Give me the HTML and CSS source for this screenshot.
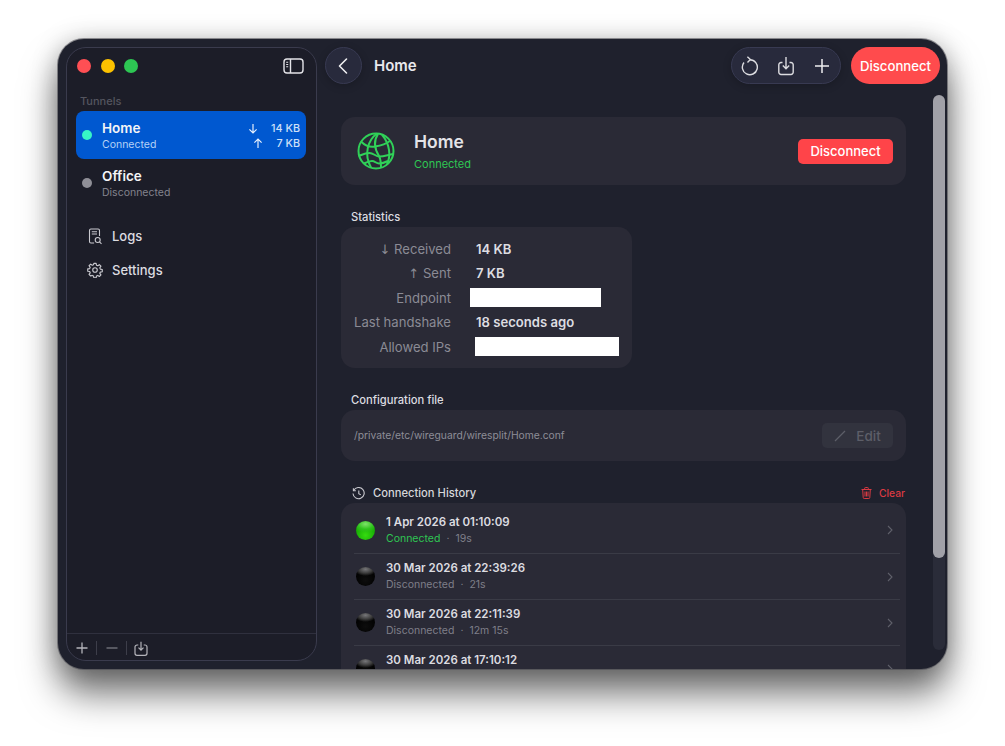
FILE: index.html
```html
<!DOCTYPE html>
<html lang="en">
<head>
<meta charset="utf-8">
<title>Wiresplit</title>
<link rel="stylesheet" href="styles.css">
</head>
<body>
<div class="window">
  <aside class="sidebar">
    <div class="side-top">
      <div class="lights"><span class="light red"></span><span class="light yellow"></span><span class="light green"></span></div>
      <svg class="side-toggle" width="21" height="16" viewBox="0 0 21 16" fill="none" stroke="#e4e4e8" stroke-width="1.400"><rect x="1" y="1" width="19" height="14" rx="3"/><path d="M7.500 1v14"/><path d="M3.200 4.300h2M3.200 6.500h2M3.200 8.700h2" stroke-width="1.100"/></svg>
    </div>
    <div class="side-label">Tunnels</div>
    <div class="tunnel active">
      <span class="tdot on"></span>
      <div class="tinfo"><div class="tname">Home</div><div class="tstate">Connected</div></div>
      <div class="ttraffic">
        <div class="tline"><svg width="10" height="11" viewBox="0 0 10 11" fill="none" stroke="currentColor" stroke-width="1.200"><path d="M5 1v9M1.400 6.400 5 10l3.600-3.600"/></svg><span class="tv1">14 KB</span></div>
        <div class="tline"><svg width="10" height="11" viewBox="0 0 10 11" fill="none" stroke="currentColor" stroke-width="1.200"><path d="M5 10V1M1.400 4.600 5 1l3.600 3.600"/></svg><span class="tv2">7 KB</span></div>
      </div>
    </div>
    <div class="tunnel">
      <span class="tdot off"></span>
      <div class="tinfo"><div class="tname">Office</div><div class="tstate">Disconnected</div></div>
    </div>
    <nav class="side-nav">
      <div class="nav-item">
        <svg width="16" height="17" viewBox="0 0 16 17" fill="none" stroke="#c9c9cf" stroke-width="1.100"><path d="M12.500 8V2.400A1.400 1.400 0 0 0 11.100 1H3.900A1.400 1.400 0 0 0 2.500 2.400v11.200A1.400 1.400 0 0 0 3.900 15h3.200"/><path d="M4.800 3.800h5.200M4.800 6h5.200"/><circle cx="10.700" cy="12" r="2.500"/><path d="m12.500 13.800 2 2"/></svg>
        <span>Logs</span>
      </div>
      <div class="nav-item">
        <svg width="16" height="16" viewBox="0 0 24 24" fill="none" stroke="#c9c9cf" stroke-width="1.700" stroke-linejoin="round"><circle cx="12" cy="12" r="3.400"/><path d="M10.300 2h3.400l.5 2.900 1.900.8 2.400-1.700 2.400 2.400-1.700 2.400.8 1.900 2.900.5v3.400l-2.900.5-.8 1.900 1.700 2.400-2.400 2.400-2.400-1.700-1.900.8-.5 2.900h-3.400l-.5-2.900-1.900-.8L5.500 21 3.100 18.600l1.700-2.400-.8-1.900L1.100 13.800v-3.400L4 9.900l.8-1.900L3.100 5.600 5.500 3.200l2.400 1.700 1.900-.8z"/></svg>
        <span>Settings</span>
      </div>
    </nav>
    <div class="side-foot">
      <svg width="12" height="12" viewBox="0 0 12 12" stroke="#b4b4ba" stroke-width="1.300"><path d="M6 .5v11M.5 6h11"/></svg>
      <span class="foot-sep"></span>
      <svg class="dim" width="12" height="12" viewBox="0 0 12 12" stroke="#6b6c75" stroke-width="1.300"><path d="M.5 6h11"/></svg>
      <span class="foot-sep"></span>
      <svg class="foot-import" width="14" height="15" viewBox="0 0 14 15" fill="none" stroke="#b4b4ba" stroke-width="1.200"><path d="M4.300 4H3a2 2 0 0 0-2 2v6.300a2 2 0 0 0 2 2h8a2 2 0 0 0 2-2V6a2 2 0 0 0-2-2H9.700"/><path d="M7 .8v8M4.500 6.600 7 9.100l2.500-2.500"/></svg>
    </div>
  </aside>

  <main class="main">
    <header class="topbar">
      <button class="back"><svg width="12" height="18" viewBox="0 0 12 18" fill="none" stroke="#eeeef0" stroke-width="1.600" stroke-linecap="round" stroke-linejoin="round"><path d="M8.500 2 1.500 9l7 7"/></svg></button>
      <div class="top-title">Home</div>
      <div class="tools">
        <svg width="18" height="20" viewBox="0 0 18 20" fill="none" stroke="#dcdce0" stroke-width="1.400"><path d="M9 3.700A7.500 7.500 0 1 1 3 6.500"/><path d="M6.400 .7 9.400 3.600 6.500 6.500"/></svg>
        <svg width="18" height="20" viewBox="-0.500 0 18 20" fill="none" stroke="#dcdce0" stroke-width="1.400"><path d="M5 6.500H3.500a2.200 2.200 0 0 0-2.200 2.200v7.600a2.200 2.200 0 0 0 2.200 2.200h10a2.200 2.200 0 0 0 2.200-2.200V8.700a2.200 2.200 0 0 0-2.200-2.200H12"/><path d="M8.500 1v11.500M5.300 9.500l3.200 3.200 3.200-3.200"/></svg>
        <svg width="18" height="16" viewBox="-1 0 18 16" stroke="#eeeef0" stroke-width="1.500"><path d="M8 1v14M1 8h14"/></svg>
      </div>
      <button class="pill-danger">Disconnect</button>
    </header>

    <div class="content">
      <section class="card hero">
        <svg class="globe" width="38" height="38" viewBox="0 0 38 38" fill="none" stroke="#30d158" stroke-width="2"><circle cx="19" cy="19" r="17.500"/><path d="M20 1.500C11 8 6.500 22 14 35.500"/><path d="M21 2c-4 6-4 14 1 22 1.500 3 2 7 2 11.500"/><path d="M25 2.800C33 12 34 24 30 32"/><path d="M4 9.500c4 4 9 6 14 5 6-1 11-2.500 15-5.500"/><path d="M1.500 24c4-1.500 7-3 11-3 4 0 6 3.500 10 3.500 5 0 9-2 13.500-2.500"/><path d="M7 31.500c3-1.500 5-2.500 8-2.500 3 0 4 2.500 7 2.500 3 0 6-1 9-2.500"/></svg>
        <div class="hero-text">
          <div class="hero-name">Home</div>
          <div class="hero-state">Connected</div>
        </div>
        <button class="btn-danger">Disconnect</button>
      </section>

      <h2 class="sec-label stats-label">Statistics</h2>
      <section class="card stats">
        <div class="s-k"><span class="s-arrow">↓</span> Received</div><div class="s-v">14 KB</div>
        <div class="s-k"><span class="s-arrow">↑</span> Sent</div><div class="s-v">7 KB</div>
        <div class="s-k">Endpoint</div><div class="s-v"><span class="redact r1"></span></div>
        <div class="s-k">Last handshake</div><div class="s-v">18 seconds ago</div>
        <div class="s-k">Allowed IPs</div><div class="s-v"><span class="redact r2"></span></div>
      </section>

      <h2 class="sec-label conf-label">Configuration file</h2>
      <section class="card conf">
        <div class="conf-path">/private/etc/wireguard/wiresplit/Home.conf</div>
        <button class="btn-edit"><svg width="12" height="12" viewBox="0 0 12 12" stroke="#5d5e68" stroke-width="1.300"><path d="M1 11 11 1"/></svg><span>Edit</span></button>
      </section>

      <div class="hist-head">
        <svg width="13" height="13" viewBox="0 0 13 13" fill="none" stroke="#c9c9cf" stroke-width="1.100"><path d="M1.700 3.400A5.600 5.600 0 1 1 1 6.500"/><path d="M1.400 1.200v2.500h2.500"/><path d="M6.800 3.500v3.200l2 1.200"/></svg>
        <span class="hist-title">Connection History</span>
        <svg class="trash" width="11" height="12" viewBox="0 0 11 12" fill="none" stroke="#d93a42" stroke-width="1"><path d="M.5 2.500h10M3.700 2.500V1.200q0-.7.700-.7h2.200q.7 0 .7.700v1.300M1.700 2.500l.5 8q0 1 1 1h4.600q1 0 1-1l.5-8M4 4.500v5M5.500 4.500v5M7 4.500v5"/></svg>
        <span class="hist-clear">Clear</span>
      </div>

      <section class="card hist">
        <div class="row first">
          <span class="orb green-orb"></span>
          <div class="row-text"><div class="row-title">1 Apr 2026 at 01:10:09</div><div class="row-sub"><span class="ok">Connected</span><i>·</i><span>19s</span></div></div>
          <svg class="chev" width="6" height="10" viewBox="0 0 6 10" fill="none" stroke="#5e5f69" stroke-width="1.100"><path d="m1 1 4 4-4 4"/></svg>
        </div>
        <div class="row">
          <span class="orb"></span>
          <div class="row-text"><div class="row-title">30 Mar 2026 at 22:39:26</div><div class="row-sub"><span>Disconnected</span><i>·</i><span>21s</span></div></div>
          <svg class="chev" width="6" height="10" viewBox="0 0 6 10" fill="none" stroke="#5e5f69" stroke-width="1.100"><path d="m1 1 4 4-4 4"/></svg>
        </div>
        <div class="row">
          <span class="orb"></span>
          <div class="row-text"><div class="row-title">30 Mar 2026 at 22:11:39</div><div class="row-sub"><span>Disconnected</span><i>·</i><span>12m 15s</span></div></div>
          <svg class="chev" width="6" height="10" viewBox="0 0 6 10" fill="none" stroke="#5e5f69" stroke-width="1.100"><path d="m1 1 4 4-4 4"/></svg>
        </div>
        <div class="row">
          <span class="orb"></span>
          <div class="row-text"><div class="row-title">30 Mar 2026 at 17:10:12</div></div>
          <svg class="chev" width="6" height="10" viewBox="0 0 6 10" fill="none" stroke="#5e5f69" stroke-width="1.100"><path d="m1 1 4 4-4 4"/></svg>
        </div>
      </section>
    </div>

    <div class="scroll"><div class="thumb"></div></div>
  </main>
</div>
</body>
</html>
```

FILE: styles.css
```css
* { box-sizing: border-box; }
html, body { margin: 0; height: 100%; }
body {
  background: #fff;
  padding: 39px 58px 0;
  font-family: Inter, "Liberation Sans", sans-serif;
  color: #e8e8ec;
  overflow: hidden;
}
button { font-family: inherit; border: 0; padding: 0; }
h2 { margin: 0; font-weight: 500; }

.window {
  width: 889px;
  height: 630px;
  border-radius: 26px;
  background: #1f212d;
  display: flex;
  overflow: hidden;
  position: relative;
  box-shadow: 0 0 0 1px rgba(70,70,76,.55), 0 25px 36px rgba(0,0,0,.54), 0 2px 26px rgba(0,0,0,.26);
}

/* sidebar */
.sidebar {
  width: 251px;
  flex: none;
  margin: 8px 0 8px 8px;
  border: 1px solid #3a3b4d;
  border-radius: 20px;
  background: #1c1d28;
  display: flex;
  flex-direction: column;
  padding: 0 10px 0 9px;
}
.side-top { height: 35px; display: flex; align-items: center; justify-content: space-between; padding: 0 2px 0 1px; }
.lights { display: flex; gap: 9.500px; }
.light { width: 14px; height: 14px; border-radius: 50%; }
.red { background: #ff4f54; }
.yellow { background: #fdc200; }
.green { background: #2dc653; }
.side-label { margin: 11px 0 2px 4px; height: 15px; line-height: 15px; font-size: 11px; font-weight: 500; color: #54555f; }
.tunnel { height: 48px; border-radius: 8px; display: flex; align-items: center; padding: 0 6px; }
.tunnel.active { background: #0058d0; }
.tdot { width: 10px; height: 10px; border-radius: 50%; margin-right: 10px; flex: none; }
.on { background: #37f5c6; }
.off { background: #8f8f97; }
.tinfo { flex: 1; }
.tname { font-size: 13.500px; line-height: 18px; font-weight: 600; color: #f4f4f6; }
.tstate { font-size: 10.500px; line-height: 14px; margin-top: 1px; color: #83838d; }
.active .tstate { color: #b6d2f6; }
.ttraffic { display: flex; flex-direction: column; padding-top: 1px; }
.tline { display: flex; align-items: center; justify-content: flex-end; height: 15px; font-size: 10.800px; font-weight: 500; color: #cfe0f8; }
.tline svg { color: #e4eefc; }
.tv1, .tv2 { margin-left: 13px; }
.side-nav { margin-top: 12px; padding-left: 11px; display: flex; flex-direction: column; }
.nav-item { height: 34px; display: flex; align-items: center; gap: 9px; font-size: 13px; font-weight: 500; color: #dcdce0; }
.side-foot {
  margin: auto -10px 0 -9px;
  height: 27px;
  border-top: 1px solid #2f303e;
  display: flex;
  align-items: center;
  padding: 2px 0 0 9px;
}
.foot-sep { width: 1px; height: 14px; background: #3d3e4a; margin: 0 8px; }
.dim { margin-left: 1px; }
.foot-import { margin-left: -1px; }

/* main */
.main { flex: 1; min-width: 0; display: flex; flex-direction: column; padding: 8px 0 0 8px; position: relative; }
.topbar { display: flex; align-items: center; height: 37px; flex: none; padding-right: 7px; }
.back {
  width: 37px; height: 37px; border-radius: 50%;
  background: #282a3c; border: 1px solid #383a52;
  display: flex; align-items: center; justify-content: center;
  box-shadow: 0 2px 8px rgba(0,0,0,.2);
}
.top-title { margin-left: 12px; flex: 1; font-size: 15px; font-weight: 600; color: #e9e9ed; }
.tools {
  width: 110px; height: 37px; border-radius: 19px;
  background: #282a3c; border: 1px solid #383a52;
  display: flex; align-items: center; justify-content: center; gap: 18px;
  box-shadow: 0 2px 8px rgba(0,0,0,.2);
}
.pill-danger {
  margin-left: 10px; width: 89px; height: 37px; border-radius: 19px;
  background: #ff4b4d; color: #fff; font-size: 13.200px; font-weight: 500;
}
.content { width: 565px; margin: 33px 0 0 16px; flex: none; }
.card { background: #2a2a36; border-radius: 14px; }
.hero { height: 68px; display: flex; align-items: center; padding: 0 13px 0 16px; }
.globe { flex: none; }
.hero-text { flex: 1; margin-left: 19px; }
.hero-name { font-size: 17.500px; line-height: 22px; font-weight: 600; color: #e4e4e8; }
.hero-state { font-size: 11px; line-height: 14px; margin-top: 4px; color: #2fc653; }
.btn-danger {
  width: 95px; height: 25px; border-radius: 5px;
  background: #ff4449; color: #fff; font-size: 13px; font-weight: 500;
}
.sec-label { font-size: 11.200px; line-height: 16px; color: #dcdce0; padding-left: 10px; }
.stats-label { margin-top: 24px; }
.stats {
  width: 291px; height: 141px; margin-top: 2px; padding: 9.500px 0;
  display: grid;
  grid-template-columns: 110px 1fr;
  grid-auto-rows: 24.500px;
  column-gap: 25px;
  align-items: center;
  font-size: 13.100px;
}
.s-k { text-align: right; color: #8b8b95; font-weight: 400; white-space: nowrap; }
.s-arrow { font-family: "DejaVu Sans", sans-serif; font-size: 13px; }
.s-v { font-weight: 600; color: #dddde1; white-space: nowrap; display: flex; }
.redact { display: block; height: 19px; background: #fff; }
.r1 { width: 131px; margin-left: -6px; }
.r2 { width: 144px; margin-left: -1px; }
.conf-label { margin-top: 24px; }
.conf { height: 51px; margin-top: 2px; display: flex; align-items: center; justify-content: space-between; padding: 0 13px; }
.conf-path { font-size: 10.300px; line-height: 12px; margin-top: -2px; color: #8d8d96; }
.btn-edit {
  width: 71px; height: 25px; border-radius: 5px; background: #32333e;
  display: flex; align-items: center; justify-content: center; gap: 10px;
  color: #5d5e68; font-size: 13.500px; font-weight: 500;
}
.hist-head { margin-top: 24px; height: 16px; display: flex; align-items: center; padding: 0 1px 0 11px; font-size: 11.200px; }
.hist-title { margin-left: 8px; flex: 1; font-weight: 500; color: #d6d6da; }
.hist-clear { color: #d93a42; font-size: 10.300px; font-weight: 500; margin-left: 7px; }
.hist { margin-top: 2px; padding-bottom: 20px; }
.row { height: 46px; display: flex; align-items: center; margin: 0 6px 0 13px; padding: 0 7px 0 0; border-top: 1px solid #3a3b46; }
.row.first { height: 50px; border-top: 0; padding-top: 4px; }
.orb {
  width: 19px; height: 19px; border-radius: 50%; flex: none; margin: 0 11px 0 2px;
  background: radial-gradient(ellipse 60% 35% at 50% 12%, #77777a 0%, #3a3a3a 60%, transparent 100%), radial-gradient(circle at 50% 70%, #0d0d0d, #000 70%);
}
.green-orb {
  background: radial-gradient(ellipse 70% 45% at 50% 16%, #7fe26a 0%, #2fc41c 60%, transparent 100%), radial-gradient(circle at 50% 75%, #35dc10, #0c9a00 80%);
}
.row-text { flex: 1; min-height: 31px; }
.row-title { font-size: 11.500px; line-height: 15px; font-weight: 600; color: #dcdce0; }
.row-sub { font-size: 10.500px; line-height: 14px; margin-top: 2px; color: #7f7f89; display: flex; }
.row-sub i { font-style: normal; margin: 0 6px; }
.ok { color: #2fc653; }

/* overlay scrollbar */
.scroll { position: absolute; right: 2px; top: 56px; width: 12px; height: 555px; border-radius: 6px; background: #2a2c39; }
.thumb { height: 463px; border-radius: 6px; background: #a1a1a8; }
```
